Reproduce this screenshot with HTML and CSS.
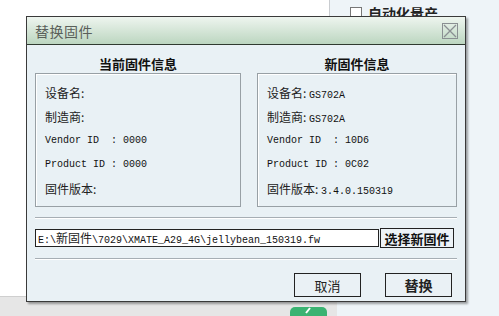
FILE: index.html
```html
<!DOCTYPE html>
<html lang="zh-CN">
<head>
    <meta charset="UTF-8">
    <title>替换固件</title>
    <link rel="stylesheet" href="styles.css">
</head>
<body>

<div class="app">
    <div class="main">
        <div class="main-top"></div>
        <div class="main-bottom">
            <span class="green-tab">
                <svg width="12" height="8" viewBox="0 0 12 8">
                    <path d="M3 6 L7 1" stroke="#ffffff" stroke-width="2" fill="none"/>
                </svg>
            </span>
        </div>
    </div>
    <div class="side">
        <label class="auto-row"><span class="check"></span>自动化量产</label>
    </div>
</div>

<div class="dialog">
    <div class="titlebar">
        <span class="title">替换固件</span>
        <span class="close">
            <svg width="14" height="14" viewBox="0 0 14 14">
                <path d="M1 1 L13 13 M13 1 L1 13" stroke="#8a8f92" stroke-width="1.3" fill="none"/>
            </svg>
        </span>
    </div>

    <div class="dialog-body">
        <div class="columns">
            <div class="column">
                <h3 class="col-title">当前固件信息</h3>
                <div class="group-box">
                    <div class="info-row">设备名:</div>
                    <div class="info-row">制造商:</div>
                    <div class="info-row mono">Vendor ID&nbsp; : 0000</div>
                    <div class="info-row mono">Product ID : 0000</div>
                    <div class="info-row">固件版本:</div>
                </div>
            </div>
            <div class="column">
                <h3 class="col-title">新固件信息</h3>
                <div class="group-box">
                    <div class="info-row">设备名: <span class="mono">GS702A</span></div>
                    <div class="info-row">制造商: <span class="mono">GS702A</span></div>
                    <div class="info-row mono">Vendor ID&nbsp; : 10D6</div>
                    <div class="info-row mono">Product ID : 0C02</div>
                    <div class="info-row">固件版本: <span class="mono">3.4.0.150319</span></div>
                </div>
            </div>
        </div>

        <div class="separator"></div>

        <div class="path-row">
            <div class="path-input"><span class="mono">E:\</span>新固件<span class="mono">\7029\XMATE_A29_4G\jellybean_150319.fw</span></div>
            <button type="button" class="pick-btn">选择新固件</button>
        </div>

        <div class="separator"></div>

        <div class="actions">
            <button type="button" class="action-btn">取消</button>
            <button type="button" class="action-btn primary">替换</button>
        </div>
    </div>
</div>

</body>
</html>
```

FILE: styles.css
```css
body {
    margin: 0;
    width: 499px;
    height: 316px;
    overflow: hidden;
    font-family: "Noto Sans CJK SC", "DejaVu Sans", sans-serif;
    font-size: 12px;
    color: #222;
    background-color: #ffffff;
}
.app {
    display: flex;
    height: 316px;
}
.main {
    width: 329px;
    display: flex;
    flex-direction: column;
}
.main-top {
    flex: 1;
    background-color: #ffffff;
}
.main-bottom {
    height: 19px;
    width: 337px;
    background-color: #e6e6e6;
    border-top: 1px solid #cfcfcf;
    position: relative;
    z-index: 1;
}
.green-tab {
    position: absolute;
    left: 290px;
    top: 10px;
    width: 37px;
    height: 14px;
    background-color: #3bb372;
    border-radius: 5px 5px 0 0;
    display: flex;
    justify-content: center;
}
.side {
    flex: 1;
    background-color: #eef4f8;
    border-left: 1px solid #c9ccd0;
}
.auto-row {
    display: flex;
    align-items: center;
    gap: 6px;
    padding: 3px 0 0 20px;
    font-size: 14px;
    font-weight: bold;
    color: #222;
}
.check {
    width: 10px;
    height: 10px;
    border: 1px solid #777;
    background-color: #fff;
}

/* ventana de diálogo */
.dialog {
    position: absolute;
    left: 26px;
    top: 16px;
    width: 438px;
    height: 284px;
    border: 1px solid #3a3a3a;
    background-color: #e9f1f5;
    box-shadow: 2px 2px 2px rgba(0, 0, 0, 0.35);
    z-index: 2;
    display: flex;
    flex-direction: column;
}
.titlebar {
    height: 27px;
    border-bottom: 1px solid #2f3a30;
    background: linear-gradient(to bottom, #eef5ef, #bcd6c0);
    display: flex;
    align-items: center;
    justify-content: space-between;
    padding: 0 7px 0 8px;
}
.title {
    font-size: 14px;
    color: #5a5f5a;
    letter-spacing: 0.5px;
}
.close {
    width: 14px;
    height: 14px;
    border: 1px solid #8a8f92;
    display: flex;
}
.dialog-body {
    padding: 0 8px 0 8px;
}
.columns {
    display: grid;
    grid-template-columns: 206px 200px;
    gap: 16px;
}
.col-title {
    margin: 0;
    height: 28px;
    line-height: 17px;
    padding-top: 10px;
    box-sizing: border-box;
    text-align: center;
    font-size: 13px;
    font-weight: bold;
    color: #111;
}
.group-box {
    height: 134px;
    box-sizing: border-box;
    border: 1px solid #98a0a5;
    box-shadow: inset 1px 1px 0 #ffffff;
    padding: 7px 0 0 9px;
}
.info-row {
    height: 24px;
    line-height: 24px;
    font-size: 12px;
    color: #222;
    white-space: pre;
}
.mono {
    font-family: "Liberation Mono", "DejaVu Sans Mono", monospace;
    font-size: 10px;
    color: #111;
}
.separator {
    height: 0;
    margin: 10px 0 0 0;
    width: 422px;
    border-top: 1px solid #a6aeb4;
    border-bottom: 1px solid #ffffff;
}
.path-row {
    display: flex;
    align-items: center;
    gap: 1px;
    margin-top: 9px;
    height: 20px;
}
.path-input {
    width: 344px;
    height: 18px;
    border: 1px solid #222;
    background-color: #ffffff;
    padding-left: 2px;
    box-sizing: border-box;
    line-height: 16px;
    font-size: 12px;
    white-space: nowrap;
    overflow: hidden;
}
.pick-btn {
    width: 74px;
    height: 20px;
    border: 1px solid #222;
    background-color: #edf3f7;
    padding: 0;
    font-family: "Noto Sans CJK SC", sans-serif;
    font-size: 13px;
    font-weight: bold;
    color: #111;
    line-height: 17px;
}
.actions {
    display: flex;
    justify-content: flex-end;
    gap: 24px;
    padding-right: 5px;
    margin-top: 13px;
}
.action-btn {
    width: 67px;
    height: 24px;
    border: 1px solid #222;
    background-color: #eaf1f5;
    padding: 0;
    font-family: "Noto Sans CJK SC", sans-serif;
    font-size: 13px;
    color: #222;
}
.action-btn.primary {
    font-size: 14px;
    font-weight: bold;
}
```
